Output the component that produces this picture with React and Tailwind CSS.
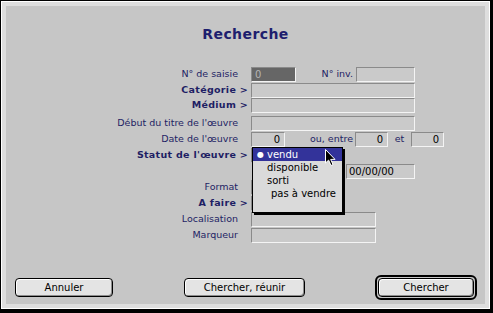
import React from "react";

const field =
  "h-[15px] border border-t-[#8a8a8a] border-l-[#8a8a8a] border-r-[#f4f4f4] border-b-[#f4f4f4] text-[10px] leading-[13px]";

function Label({ children, bold }) {
  return (
    <div
      className={
        bold
          ? "w-[245px] shrink-0 pr-[3px] text-right text-[9.5px] font-bold tracking-[0.3px] text-[#1e1e64]"
          : "w-[245px] shrink-0 pr-[13px] text-right text-[9.5px] text-[#1e1e64]"
      }
    >
      {children}
    </div>
  );
}

function Row({ label, bold, children, className = "h-[16px]" }) {
  return (
    <div className={`flex items-start ${className}`}>
      <div className="flex h-[15px] items-center">
        <Label bold={bold}>{label}</Label>
      </div>
      {children}
    </div>
  );
}

function Input({ className = "", children }) {
  return <div className={`${field} bg-[#cacaca] text-black ${className}`}>{children}</div>;
}

function Button({ children, className = "" }) {
  return (
    <button
      className={`block h-[19px] rounded-[4px] border border-black bg-[#e4e4e4] text-[10px] leading-[17px] text-black shadow-[inset_1px_1px_0_#ffffff,inset_-1px_-1px_0_#8c8c8c] ${className}`}
    >
      {children}
    </button>
  );
}

export default function App() {
  return (
    <div className="h-[313px] w-[493px] bg-black pb-[4px] pl-px pr-[3px] pt-px font-['DejaVu_Sans',sans-serif]">
      <div className="h-full w-full border border-white bg-[#dedede] p-[4px]">
        <div className="relative flex h-full w-full flex-col bg-[#c6c6c6]">
          <h1 className="mt-[18px] text-center text-[14px] font-bold leading-[20px] tracking-[0.4px] text-[#1e1e6e]">
            Recherche
          </h1>

          <div className="mt-[23px] flex flex-col">
            <Row label="N° de saisie">
              <div className={`${field} w-[45px] bg-[#666666] pl-[3px] text-[#b4b4b4]`}>0</div>
              <div className="flex h-[15px] w-[60px] items-center justify-end pr-[3px] text-[9.5px] text-[#1e1e64]">
                N° inv.
              </div>
              <Input className="w-[59px]" />
            </Row>
            <Row label="Catégorie >" bold className="h-[15px]">
              <Input className="w-[164px]" />
            </Row>
            <Row label="Médium >" bold className="h-[18px]">
              <Input className="w-[164px]" />
            </Row>
            <Row label="Début du titre de l'œuvre">
              <Input className="w-[164px]" />
            </Row>
            <Row label="Date de l'œuvre">
              <Input className="w-[34px] pr-[4px] text-right">0</Input>
              <div className="flex h-[15px] w-[70px] items-center justify-end pr-[2px] text-[9.5px] text-[#1e1e64]">
                ou, entre
              </div>
              <Input className="w-[33px] pr-[4px] text-right">0</Input>
              <div className="flex h-[15px] w-[23px] items-center justify-center text-[9.5px] text-[#1e1e64]">
                et
              </div>
              <Input className="w-[33px] pr-[4px] text-right">0</Input>
            </Row>
            <Row label="Statut de l'œuvre >" bold>
              <Input className="w-[90px]" />
            </Row>
            <Row label="">
              <Input className="ml-[95px] w-[69px] pl-[2px]">00/00/00</Input>
            </Row>
            <Row label="Format">
              <Input className="w-[90px]" />
            </Row>
            <Row label="A faire >" bold>
              <Input className="w-[90px]" />
            </Row>
            <Row label="Localisation">
              <Input className="w-[125px]" />
            </Row>
            <Row label="Marqueur">
              <Input className="w-[125px]" />
            </Row>
          </div>

          <div className="mt-[31px] flex items-center pl-[9px]">
            <Button className="w-[98px]">Annuler</Button>
            <Button className="ml-[71px] w-[121px]">Chercher, réunir</Button>
            <div className="ml-[70px] flex rounded-[6px] border-2 border-black p-px">
              <Button className="w-[96px]">Chercher</Button>
            </div>
          </div>

          {/* popup menu over Statut */}
          <div className="absolute left-[246px] top-[141px] h-[66px] w-[91px] border border-black bg-[#dadada] text-[10px] leading-[13px] text-black shadow-[2px_2px_0_#000]">
            <div className="flex h-[13px] items-center bg-[#33339a] text-white">
              <span className="w-[14px] pl-[4px] text-[8px]">●</span>
              <span>vendu</span>
            </div>
            <div className="pl-[14px]">disponible</div>
            <div className="pl-[14px]">sorti</div>
            <div className="pl-[18px]">pas à vendre</div>
          </div>

          {/* mouse cursor */}
          <svg
            className="absolute left-[319px] top-[143px]"
            width="12"
            height="18"
            viewBox="0 0 12 18"
          >
            <path
              d="M0.5 0.5 L0.5 14 L3.6 11.1 L6 16.5 L8 15.6 L5.7 10.4 L10 10.4 Z"
              fill="#000"
              stroke="#fff"
              strokeWidth="1"
            />
          </svg>
        </div>
      </div>
    </div>
  );
}
